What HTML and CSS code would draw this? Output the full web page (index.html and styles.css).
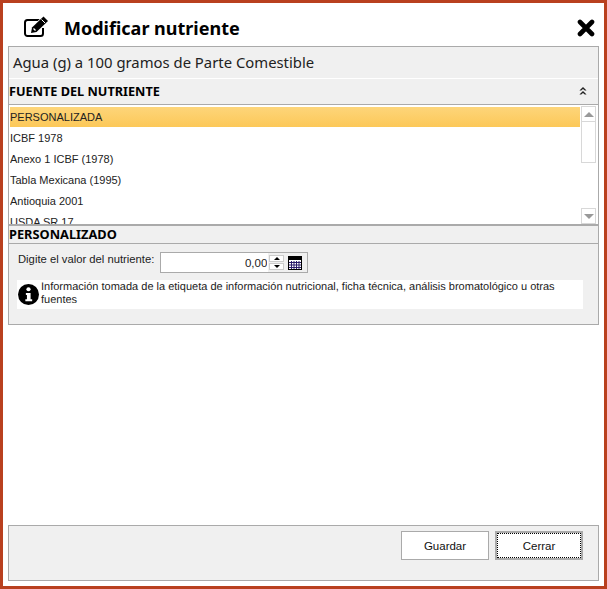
FILE: index.html
```html
<!DOCTYPE html>
<html lang="es">
<head>
    <meta charset="UTF-8">
    <meta name="viewport" content="width=device-width, initial-scale=1.0">
    <title>Modificar nutriente</title>
    <link rel="stylesheet" href="styles.css">
</head>
<body>
    <div class="window">
        <div class="title-bar">
            <svg class="title-icon" width="25" height="21" viewBox="0 0 25 21">
                <path d="M17 4H3.500A2.500 2.500 0 0 0 1 6.500v11A2.500 2.500 0 0 0 3.500 20h13a2.500 2.500 0 0 0 2.500-2.500V12" fill="none" stroke="#000" stroke-width="2"/>
                <path d="M8 11.500 19.500 0.500l4.500 4.500L12.500 16l-5.500 1z" fill="#000" stroke="#fff" stroke-width="1.500" paint-order="stroke"/>
                <path d="M9.500 12.500 11.500 14.500" stroke="#fff" stroke-width="1.200"/>
                <path d="M17.500 3.500l3.500 3.500" stroke="#fff" stroke-width="1"/>
            </svg>
            <h1>Modificar nutriente</h1>
            <svg class="close-icon" width="18" height="18" viewBox="0 0 18 18">
                <path d="M3 3 15 15M15 3 3 15" stroke="#000" stroke-width="4.600" stroke-linecap="round"/>
            </svg>
        </div>

        <div class="panel main-panel">
            <div class="nutrient-name">Agua (g) a 100 gramos de Parte Comestible</div>
            <div class="section-head">
                <span>FUENTE DEL NUTRIENTE</span>
                <svg width="8" height="8" viewBox="0 0 9 9">
                    <path d="M4.500 0 8.500 4H6.500L4.500 2.300 2.500 4H.5zM4.500 4.500l4 4H6.500L4.500 6.800 2.500 8.500H.5z" fill="#222"/>
                </svg>
            </div>
            <div class="source-list">
                <ul class="items">
                    <li class="selected">PERSONALIZADA</li>
                    <li>ICBF 1978</li>
                    <li>Anexo 1 ICBF (1978)</li>
                    <li>Tabla Mexicana (1995)</li>
                    <li>Antioquia 2001</li>
                    <li>USDA SR 17</li>
                </ul>
                <div class="scrollbar">
                    <div class="scroll-btn"><span class="arrow-up"></span></div>
                    <div class="scroll-thumb"></div>
                    <div class="scroll-space"></div>
                    <div class="scroll-btn"><span class="arrow-down"></span></div>
                </div>
            </div>
            <div class="custom-head">PERSONALIZADO</div>
            <div class="custom-body">
                <div class="value-row">
                    <label for="valor">Digite el valor del nutriente:</label>
                    <div class="value-box">
                        <input id="valor" type="text" value="0,00">
                        <div class="spin">
                            <span class="spin-btn"><span class="mini-up"></span></span>
                            <span class="spin-btn"><span class="mini-down"></span></span>
                        </div>
                        <svg class="calc" width="14" height="14" viewBox="0 0 14 14">
                            <rect x=".5" y=".5" width="13" height="13" fill="#fff" stroke="#000"/>
                            <rect x="1" y="1" width="12" height="3" fill="#000"/>
                            <path d="M1 6.500h12M1 9h12M1 11.500h12M3.500 5v8M6 5v8M8.500 5v8M11 5v8" stroke="#2a1a6a" stroke-width="1"/>
                        </svg>
                    </div>
                </div>
                <div class="info">
                    <svg class="info-icon" width="21" height="21" viewBox="0 0 20 20">
                        <circle cx="10" cy="10" r="10" fill="#000"/>
                        <circle cx="10" cy="5" r="2" fill="#fff"/>
                        <path d="M7.500 8.500H12v6h1.500V16.500h-6.500v-2H8.500v-4h-1z" fill="#fff"/>
                    </svg>
                    <p>Información tomada de la etiqueta de información nutricional, ficha técnica, análisis bromatológico u otras fuentes</p>
                </div>
            </div>
        </div>

        <div class="panel footer-panel">
            <button type="button" class="btn">Guardar</button>
            <button type="button" class="btn btn-focus"><span>Cerrar</span></button>
        </div>
    </div>
</body>
</html>
```

FILE: styles.css
```css
html, body {
    margin: 0;
    padding: 0;
    background: #fff;
}
.window {
    box-sizing: border-box;
    width: 607px;
    height: 589px;
    border: 3px solid #b9401f;
    padding: 0 5px 5px 5px;
    background: #fff;
    display: flex;
    flex-direction: column;
    font-family: "Liberation Sans", Arial, sans-serif;
    font-size: 11px;
    color: #111;
}
.title-bar {
    height: 43px;
    flex: none;
    display: flex;
    align-items: center;
    padding: 7px 4px 0 16px;
    box-sizing: border-box;
}
.title-icon {
    flex: none;
    margin-bottom: 3px;
}
h1 {
    margin: 0 0 0 15px;
    flex: 1;
    font-family: "Noto Sans", sans-serif;
    font-size: 18px;
    font-weight: bold;
    color: #000;
}
.close-icon {
    flex: none;
}
.panel {
    border: 1px solid #aaa;
    background: #f0f0f0;
}
.main-panel {
    height: 279px;
    box-sizing: border-box;
    flex: none;
}
.nutrient-name {
    height: 31px;
    line-height: 31px;
    padding-left: 4px;
    font-family: "Noto Sans", sans-serif;
    font-size: 14.850px;
    color: #222;
    border-bottom: 1px solid #fff;
}
.section-head {
    height: 26px;
    box-sizing: border-box;
    display: flex;
    align-items: center;
    justify-content: space-between;
    padding: 0 11px 1px 0;
    font-family: "Noto Sans", sans-serif;
    font-size: 12.700px;
    font-weight: bold;
    color: #000;
    border-bottom: 1px solid #aaa;
}
.source-list {
    height: 118px;
    background: #fff;
    display: flex;
    overflow: hidden;
    border-bottom: 2px solid #aaa;
    padding: 1px 1px 0 1px;
}
.items {
    list-style: none;
    margin: 1px 0 0 0;
    padding: 0;
    flex: 1;
    overflow: hidden;
}
.items li {
    height: 21px;
    line-height: 21px;
    color: #222;
    font-size: 11px;
}
.items li.selected {
    height: 20px;
    line-height: 20px;
    margin-bottom: 1px;
    margin-right: 1px;
    background: linear-gradient(to bottom, #fdd57a, #fcc858);
}
.scrollbar {
    width: 15px;
    margin: 0 1px 0 0;
    display: flex;
    flex-direction: column;
    flex: none;
}
.scroll-btn {
    height: 16px;
    flex: none;
    border: 1px solid #d8d8d8;
    box-sizing: border-box;
    display: flex;
    align-items: center;
    justify-content: center;
}
.scroll-thumb {
    height: 41px;
    flex: none;
    box-sizing: border-box;
    border: 1px solid #d8d8d8;
    border-top: 0;
    background: #fff;
}
.scroll-space {
    flex: 1;
}
.arrow-up, .arrow-down {
    width: 0;
    height: 0;
    border-left: 5px solid transparent;
    border-right: 5px solid transparent;
}
.arrow-up {
    border-bottom: 5px solid #999;
}
.arrow-down {
    border-top: 5px solid #999;
}
.custom-head {
    height: 17px;
    line-height: 16px;
    font-family: "Noto Sans", sans-serif;
    font-size: 12.800px;
    font-weight: bold;
    color: #000;
    border-bottom: 1px solid #aaa;
}
.custom-body {
    padding: 8px 15px 0 8px;
}
.value-row {
    display: flex;
    align-items: center;
    gap: 6px;
    margin-left: 1px;
}
.value-row label {
    padding-bottom: 7px;
    font-size: 11.250px;
    color: #222;
}
.value-box {
    width: 148px;
    height: 21px;
    box-sizing: border-box;
    display: flex;
    align-items: center;
    border: 1px solid #aaa;
    background: #f0f0f0;
}
.value-box input {
    width: 107px;
    height: 19px;
    box-sizing: border-box;
    border: 0;
    padding: 1px 1px 0 0;
    background: #fff;
    font-family: "Liberation Sans", Arial, sans-serif;
    font-size: 11.500px;
    color: #222;
    text-align: right;
}
.spin {
    width: 15px;
    height: 15px;
    margin-left: 1px;
    display: flex;
    flex-direction: column;
    gap: 1px;
    flex: none;
}
.spin-btn {
    flex: 1;
    background: #fff;
    border: 1px solid #ccc;
    display: flex;
    align-items: center;
    justify-content: center;
}
.mini-up, .mini-down {
    width: 0;
    height: 0;
    border-left: 3px solid transparent;
    border-right: 3px solid transparent;
}
.mini-up {
    border-bottom: 3px solid #000;
}
.mini-down {
    border-top: 3px solid #000;
}
.calc {
    margin-left: 4px;
    flex: none;
}
.info {
    margin-top: 7px;
    height: 29px;
    display: flex;
    align-items: center;
    background: #fff;
}
.info-icon {
    flex: none;
    margin: 0 2px 0 1px;
}
.info p {
    margin: 0;
    line-height: 13px;
    font-size: 11px;
    text-rendering: geometricPrecision;
    color: #222;
    padding-bottom: 1px;
}
.footer-panel {
    margin-top: auto;
    height: 56px;
    box-sizing: border-box;
    flex: none;
    display: flex;
    justify-content: flex-end;
    align-items: flex-start;
    gap: 6px;
    padding: 5px 15px 0 0;
}
.btn {
    width: 88px;
    height: 29px;
    box-sizing: border-box;
    border: 1px solid #aaa;
    background: #fff;
    font-family: "Liberation Sans", Arial, sans-serif;
    font-size: 11.500px;
    color: #111;
    padding: 0;
}
.btn-focus {
    border: 2px solid #aaa;
    padding: 0;
}
.btn-focus span {
    display: flex;
    align-items: center;
    justify-content: center;
    height: 100%;
    box-sizing: border-box;
    border: 1px dotted #000;
}
```
